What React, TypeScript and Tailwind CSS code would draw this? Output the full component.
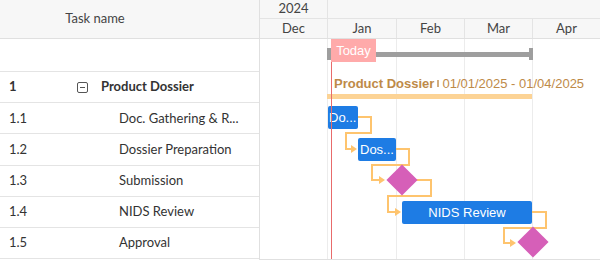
import React from 'react';

type Row = { id: string; name: string; parent?: boolean };

const rows: Row[] = [
  { id: '1', name: 'Product Dossier', parent: true },
  { id: '1.1', name: 'Doc. Gathering & R...' },
  { id: '1.2', name: 'Dossier Preparation' },
  { id: '1.3', name: 'Submission' },
  { id: '1.4', name: 'NIDS Review' },
  { id: '1.5', name: 'Approval' },
];

const months = [
  { label: 'Dec', w: 'w-[68px]' },
  { label: 'Jan', w: 'w-[69px]' },
  { label: 'Feb', w: 'w-[68px]' },
  { label: 'Mar', w: 'w-[68px]' },
];

// connector paths in chart body coordinates
const links = [
  { d: 'M98 78 H111 V94 H86 V110 H93', tip: [97, 110] },
  { d: 'M136 110 H149 V126 H112 V141 H121', tip: [125, 141] },
  { d: 'M156 141 H171 V157 H128 V173 H137', tip: [141, 173] },
  { d: 'M272 173 H286 V189 H244 V204 H252', tip: [256, 204] },
];

const GridRow = ({ row }: { row: Row }) => (
  <div className="h-[31.2px] flex items-center border-b border-[#e4e4e4] text-[13px] text-[#333]">
    <div className={`w-[77px] pl-[9px] ${row.parent ? 'font-bold' : ''}`}>{row.id}</div>
    {row.parent ? (
      <div className="flex items-center">
        <span className="w-[11px] h-[11px] border border-[#555] rounded-[2px] flex items-center justify-center">
          <span className="w-[5px] h-px bg-[#555]" />
        </span>
        <span className="ml-[13px] font-bold">{row.name}</span>
      </div>
    ) : (
      <div className="pl-[42px] whitespace-nowrap">{row.name}</div>
    )}
  </div>
);

const Bar = ({ className, label }: { className: string; label: string }) => (
  <div
    className={`absolute h-[23px] rounded-[2px] bg-[#1e7ce4] text-white text-[13px] leading-[23px] whitespace-nowrap ${className}`}
  >
    {label}
  </div>
);

export default function App() {
  return (
    <div className="w-[600px] h-[260px] flex bg-white overflow-hidden font-['Lato',sans-serif]">
      {/* task grid */}
      <div className="w-[260px] shrink-0 border-r border-[#e0e0e0] flex flex-col">
        <div className="h-[39px] shrink-0 bg-[#f7f7f7] border-b border-[#e0e0e0] flex items-center">
          <div className="w-[190px] text-center text-[13px] text-[#444]">Task name</div>
        </div>
        <div className="h-[33px] shrink-0 border-b border-[#e4e4e4]" />
        {rows.map((r) => (
          <GridRow key={r.id} row={r} />
        ))}
      </div>

      {/* timeline */}
      <div className="flex-1 flex flex-col">
        <div className="h-[39px] shrink-0 bg-[#f7f7f7] border-b border-[#e0e0e0] text-[13px] text-[#444]">
          <div className="h-[19px] flex border-b border-[#e4e4e4]">
            <div className="w-[68px] border-r border-[#e4e4e4] flex items-center justify-center">2024</div>
            <div className="flex-1" />
          </div>
          <div className="h-[19px] flex">
            {months.map((m) => (
              <div key={m.label} className={`${m.w} border-r border-[#e4e4e4] flex items-center justify-center`}>
                {m.label}
              </div>
            ))}
            <div className="flex-1 flex items-center justify-center">Apr</div>
          </div>
        </div>

        <div className="relative flex-1 border-b border-[#e0e0e0] font-['Liberation_Sans',Arial,sans-serif]">
          <div className="absolute inset-0 flex">
            {months.map((m) => (
              <div key={m.label} className={`${m.w} border-r border-[#ececec]`} />
            ))}
          </div>

          {/* project summary */}
          <div className="absolute left-[67px] top-[12.5px] w-[205px] h-[5px] bg-[#9e9e9e]" />
          <div className="absolute left-[67px] top-[9px] w-[4px] h-[12px] bg-[#9e9e9e]" />
          <div className="absolute left-[269px] top-[9px] w-[4px] h-[12px] bg-[#9e9e9e]" />

          <div className="absolute left-[74px] top-[37px] text-[13px] leading-[15px] text-[#be8a48] whitespace-nowrap flex items-center">
            <span className="font-bold">Product Dossier</span>
            <span className="inline-block w-[2px] h-[7px] bg-[#be8a48] mx-[3px] opacity-70" />
            <span>01/01/2025 - 01/04/2025</span>
          </div>
          <div className="absolute left-[67px] top-[55px] w-[205px] h-[5px] bg-[#fcd395]" />

          {/* dependency links */}
          <svg className="absolute inset-0 w-full h-full" viewBox="0 0 340 220" width={340} height={220}>
            {links.map((l, i) => (
              <g key={i}>
                <path d={l.d} fill="none" stroke="#fec46e" strokeWidth={2} />
                <path
                  d={`M${l.tip[0]} ${l.tip[1]} L${l.tip[0] - 6} ${l.tip[1] - 4} L${l.tip[0] - 6} ${l.tip[1] + 4} Z`}
                  fill="#fec46e"
                />
              </g>
            ))}
          </svg>

          <Bar className="left-[68px] top-[67px] w-[30px] pl-[1px]" label="Do..." />
          <Bar className="left-[98px] top-[99px] w-[38px] pl-[2px]" label="Dos..." />
          <div className="absolute left-[130.5px] top-[130px] w-[22px] h-[22px] rotate-45 bg-[#d65fb8]" />
          <Bar className="left-[142px] top-[162px] w-[130px] text-center" label="NIDS Review" />
          <div className="absolute left-[261.5px] top-[192px] w-[22px] h-[22px] rotate-45 bg-[#d65fb8]" />

          {/* today marker */}
          <div className="absolute left-[71px] top-0 bottom-0 w-px bg-[#e86b6b]" />
          <div className="absolute left-[71px] top-0 w-[45px] h-[23px] bg-[#ffaaaa] text-white text-[13px] leading-[23px] text-center">
            Today
          </div>
        </div>
      </div>
    </div>
  );
}
